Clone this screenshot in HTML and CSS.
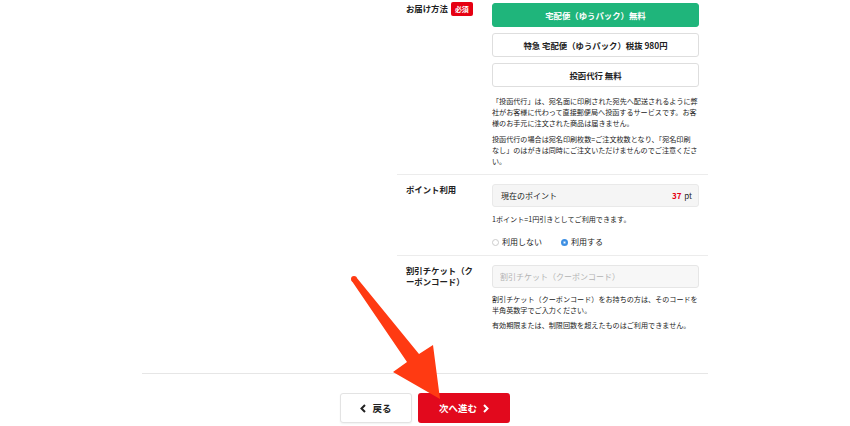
FILE: index.html
```html
<!DOCTYPE html>
<html lang="ja">
<head>
  <meta charset="UTF-8" />
  <meta name="viewport" content="width=device-width, initial-scale=1.0"/>
  <title>ご注文手続き</title>
  <link rel="stylesheet" href="styles.css">
</head>
<body>
  <div class="page">
    <div class="layout">
      <div class="side"></div>
      <div class="form">

        <div class="row">
          <div class="label">お届け方法<span class="badge">必須</span></div>
          <div class="field">
            <div class="options">
              <button class="option selected">宅配便（ゆうパック）無料</button>
              <button class="option">特急 宅配便（ゆうパック）税抜 980円</button>
              <button class="option">投函代行 無料</button>
            </div>
            <div class="note">
              <p>「投函代行」は、宛名面に印刷された宛先へ配送されるように弊社がお客様に代わって直接郵便局へ投函するサービスです。お客様のお手元に注文された商品は届きません。</p>
              <p>投函代行の場合は宛名印刷枚数=ご注文枚数となり、「宛名印刷<br>なし」のはがきは同時にご注文いただけませんのでご注意くださ<br>い。</p>
            </div>
          </div>
        </div>

        <div class="row">
          <div class="label">ポイント利用</div>
          <div class="field">
            <div class="points">
              <span>現在のポイント</span>
              <span><b class="num">37</b> pt</span>
            </div>
            <div class="note small">1ポイント=1円引きとしてご利用できます。</div>
            <div class="radios">
              <label class="radio"><span class="dot"></span>利用しない</label>
              <label class="radio"><span class="dot on"></span>利用する</label>
            </div>
          </div>
        </div>

        <div class="row last">
          <div class="label">割引チケット（クーポンコード）</div>
          <div class="field">
            <input class="coupon" type="text" placeholder="割引チケット（クーポンコード）">
            <div class="note help">
              <p>割引チケット（クーポンコード）をお持ちの方は、そのコードを半角英数字でご入力ください。</p>
              <p>有効期限または、制限回数を超えたものはご利用できません。</p>
            </div>
          </div>
        </div>

      </div>
    </div>

    <div class="actions">
      <button class="btn back">
        <svg width="6" height="9" viewBox="0 0 6 9"><polyline points="5,1 1.5,4.5 5,8" fill="none" stroke="#222" stroke-width="2"/></svg>
        戻る
      </button>
      <button class="btn next">
        次へ進む
        <svg width="6" height="9" viewBox="0 0 6 9"><polyline points="1,1 4.5,4.5 1,8" fill="none" stroke="#fff" stroke-width="2"/></svg>
      </button>
    </div>
  </div>

  <!-- annotation arrow drawn over the page -->
  <svg class="arrow" width="850" height="426" viewBox="0 0 850 426">
    <circle cx="354" cy="279" r="3" fill="#ff3a12"/>
    <polygon points="351.5,280.5 356.5,277.5 419,354 433,345 440,399 393,372 407,362" fill="#ff3a12"/>
  </svg>
</body>
</html>
```
FILE: styles.css
```css
* {
  box-sizing: border-box;
}
body {
  margin: 0;
  background: #fff;
  color: #222;
  font-family: "Noto Sans CJK JP", "Noto Sans", sans-serif;
  position: relative;
  height: 426px;
  overflow: hidden;
}
p {
  margin: 0;
}
.page {
  width: 566px;
  margin: 0 auto;
}
.layout {
  display: grid;
  grid-template-columns: 255px 311px;
}
.row {
  display: flex;
  gap: 16px;
  padding: 3px 9px 7px;
  border-bottom: 1px solid #ececec;
}
.row + .row {
  padding-top: 9px;
}
.row.last {
  border-bottom: none;
  padding-bottom: 42px;
}
.label {
  width: 70px;
  flex-shrink: 0;
  font-size: 8.4px;
  font-weight: bold;
  line-height: 11px;
  display: flex;
  align-items: flex-start;
  flex-wrap: wrap;
}
.badge {
  display: inline-block;
  background: #e60012;
  color: #fff;
  font-size: 7px;
  line-height: 14px;
  height: 14px;
  padding: 0 4px;
  border-radius: 2px;
  margin-left: 3px;
  margin-top: -1px;
}
.field {
  width: 207px;
}
.options {
  display: flex;
  flex-direction: column;
  gap: 6px;
}
.option {
  height: 24px;
  border: 1px solid #dedede;
  border-radius: 3px;
  background: #fff;
  font-family: inherit;
  font-size: 8.4px;
  font-weight: bold;
  color: #222;
  padding: 0;
}
.option.selected {
  background: #1fb57b;
  border-color: #1fb57b;
  color: #fff;
}
.note {
  font-size: 7.1px;
  line-height: 11px;
  color: #222;
  margin-top: 9px;
}
.note p + p {
  margin-top: 5px;
}
.points {
  height: 23px;
  background: #f5f5f5;
  border: 1px solid #e9e9e9;
  border-radius: 3px;
  display: flex;
  align-items: center;
  justify-content: space-between;
  padding: 0 6px 0 8px;
  font-size: 8px;
}
.num {
  color: #e60012;
  margin-right: 1px;
}
.note.small {
  margin-top: 7px;
}
.radios {
  display: flex;
  gap: 19px;
  margin-top: 11px;
  font-size: 8px;
  line-height: 12px;
}
.radio {
  display: flex;
  align-items: center;
  gap: 3px;
}
.dot {
  width: 7px;
  height: 7px;
  border-radius: 50%;
  border: 1px solid #ccc;
  background: #fff;
}
.dot.on {
  border: 2px solid #3d8fe3;
  background: #fff;
  box-shadow: inset 0 0 0 0.5px #3d8fe3;
}
.coupon {
  display: block;
  width: 100%;
  height: 23px;
  border: 1px solid #e6e6e6;
  border-radius: 3px;
  background: #f7f7f7;
  padding: 0 7px;
  font-family: inherit;
  font-size: 8px;
  color: #222;
}
.coupon::placeholder {
  color: #b3b3b3;
}
.note.help {
  margin-top: 6px;
}
.note.help p + p {
  margin-top: 4px;
}
.actions {
  border-top: 1px solid #e6e6e6;
  display: flex;
  justify-content: center;
  gap: 6px;
  padding-top: 19px;
}
.btn {
  height: 30px;
  border-radius: 3px;
  font-family: inherit;
  font-size: 9.5px;
  font-weight: bold;
  display: flex;
  align-items: center;
  justify-content: center;
  gap: 6px;
  padding: 0;
  cursor: pointer;
}
.back {
  width: 72px;
  background: #fff;
  border: 1px solid #e3e3e3;
  color: #222;
  box-shadow: 0 1px 2px rgba(0,0,0,0.06);
}
.next {
  width: 92px;
  background: #e2091d;
  border: none;
  color: #fff;
}
.arrow {
  position: absolute;
  left: 0;
  top: 0;
  pointer-events: none;
}
```
